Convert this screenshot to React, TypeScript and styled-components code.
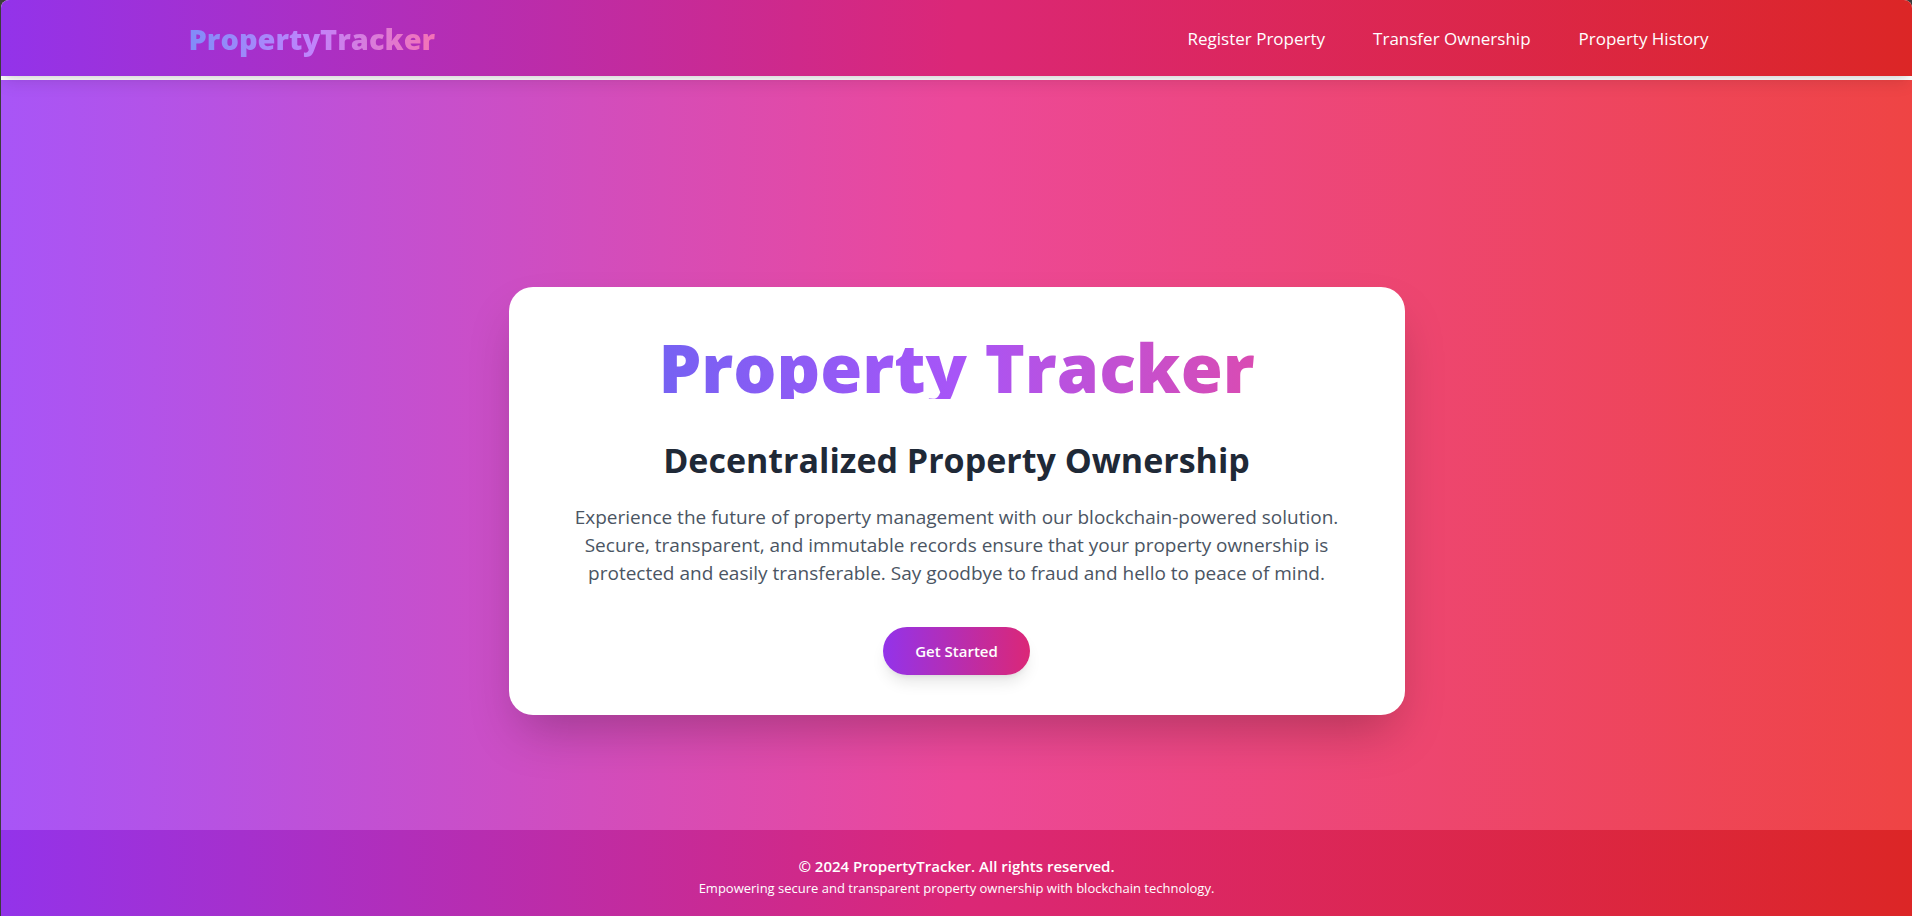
import React from "react";
import styled, { createGlobalStyle } from "styled-components";

const GlobalStyle = createGlobalStyle`
  *, *::before, *::after {
    box-sizing: border-box;
  }

  body {
    margin: 0;
    background: #3c3c3c;
    font-family: "Segoe UI", "Open Sans", "Noto Sans", sans-serif;
  }

  h1, h2, p {
    margin: 0;
  }
`;

const Page = styled.div`
  min-height: 100vh;
  margin-left: 1px;
  display: flex;
  flex-direction: column;
  overflow: hidden;
  background: #ffffff;
  border-radius: 8px 8px 0 0;
`;

const Header = styled.header`
  position: relative;
  margin-bottom: 4px;
  background: linear-gradient(to right, #9333ea, #db2777, #dc2626);
  box-shadow: 0 10px 15px -3px rgba(0, 0, 0, 0.1), 0 4px 6px -4px rgba(0, 0, 0, 0.1);
`;

const HeaderInner = styled.div`
  max-width: 1536px;
  min-height: 76px;
  margin: 0 auto;
  padding-top: 2px;
  display: flex;
  align-items: center;
  justify-content: space-between;
`;

const Logo = styled.a`
  font-size: 29px;
  line-height: 36px;
  font-weight: 800;
  text-decoration: none;
  color: transparent;
  background: linear-gradient(to right, #818cf8, #c084fc, #f472b6);
  background-clip: text;
  -webkit-background-clip: text;
`;

const Nav = styled.nav`
  display: flex;
  gap: 16px;
`;

const NavLink = styled.a`
  padding: 8px 16px;
  font-size: 17px;
  line-height: 28px;
  color: #ffffff;
  text-decoration: none;
`;

const Main = styled.main`
  flex: 1;
  display: flex;
  align-items: center;
  justify-content: center;
  padding: 92px 16px 0;
  background: linear-gradient(to right, #a855f7, #ec4899, #ef4444);
`;

const Card = styled.section`
  width: 100%;
  max-width: 896px;
  padding: 40px;
  display: flex;
  flex-direction: column;
  align-items: center;
  text-align: center;
  background: #ffffff;
  border-radius: 24px;
  box-shadow: 0 25px 50px -12px rgba(0, 0, 0, 0.25);
`;

const Title = styled.h1`
  width: 100%;
  margin-bottom: 40px;
  padding-top: 8px;
  font-size: 68px;
  line-height: 64px;
  font-weight: 800;
  color: transparent;
  background: linear-gradient(to right, #6366f1, #a855f7, #ec4899);
  background-clip: text;
  -webkit-background-clip: text;
`;

const Subtitle = styled.h2`
  margin-bottom: 22px;
  font-size: 34px;
  line-height: 42px;
  font-weight: 700;
  color: #1f2937;
`;

const Description = styled.p`
  max-width: 768px;
  margin-bottom: 40px;
  font-size: 19px;
  line-height: 28px;
  color: #4b5563;
`;

const StartButton = styled.button`
  padding: 12px 32px;
  border: 0;
  border-radius: 24px;
  font-family: inherit;
  font-size: 15px;
  line-height: 24px;
  font-weight: 600;
  color: #ffffff;
  background: linear-gradient(to right, #9333ea, #db2777);
  box-shadow: 0 10px 15px -3px rgba(0, 0, 0, 0.1), 0 4px 6px -4px rgba(0, 0, 0, 0.1);
  cursor: pointer;
`;

const Footer = styled.footer`
  padding: 24px 16px 18px;
  text-align: center;
  color: #ffffff;
  background: linear-gradient(to right, #9333ea, #db2777, #dc2626);
`;

const Copyright = styled.p`
  font-size: 15px;
  line-height: 24px;
  font-weight: 600;
`;

const Tagline = styled.p`
  font-size: 13px;
  line-height: 20px;
`;

const links = [
  { label: "Register Property", href: "#register" },
  { label: "Transfer Ownership", href: "#transfer" },
  { label: "Property History", href: "#history" },
];

export default function App() {
  return (
    <>
      <GlobalStyle />
      <Page>
        <Header>
          <HeaderInner>
            <Logo href="#home">PropertyTracker</Logo>
            <Nav>
              {links.map((link) => (
                <NavLink key={link.href} href={link.href}>
                  {link.label}
                </NavLink>
              ))}
            </Nav>
          </HeaderInner>
        </Header>
        <Main>
          <Card>
            <Title>Property Tracker</Title>
            <Subtitle>Decentralized Property Ownership</Subtitle>
            <Description>
              Experience the future of property management with our blockchain-powered solution.
              Secure, transparent, and immutable records ensure that your property ownership is
              protected and easily transferable. Say goodbye to fraud and hello to peace of mind.
            </Description>
            <StartButton type="button">Get Started</StartButton>
          </Card>
        </Main>
        <Footer>
          <Copyright>© 2024 PropertyTracker. All rights reserved.</Copyright>
          <Tagline>
            Empowering secure and transparent property ownership with blockchain technology.
          </Tagline>
        </Footer>
      </Page>
    </>
  );
}
